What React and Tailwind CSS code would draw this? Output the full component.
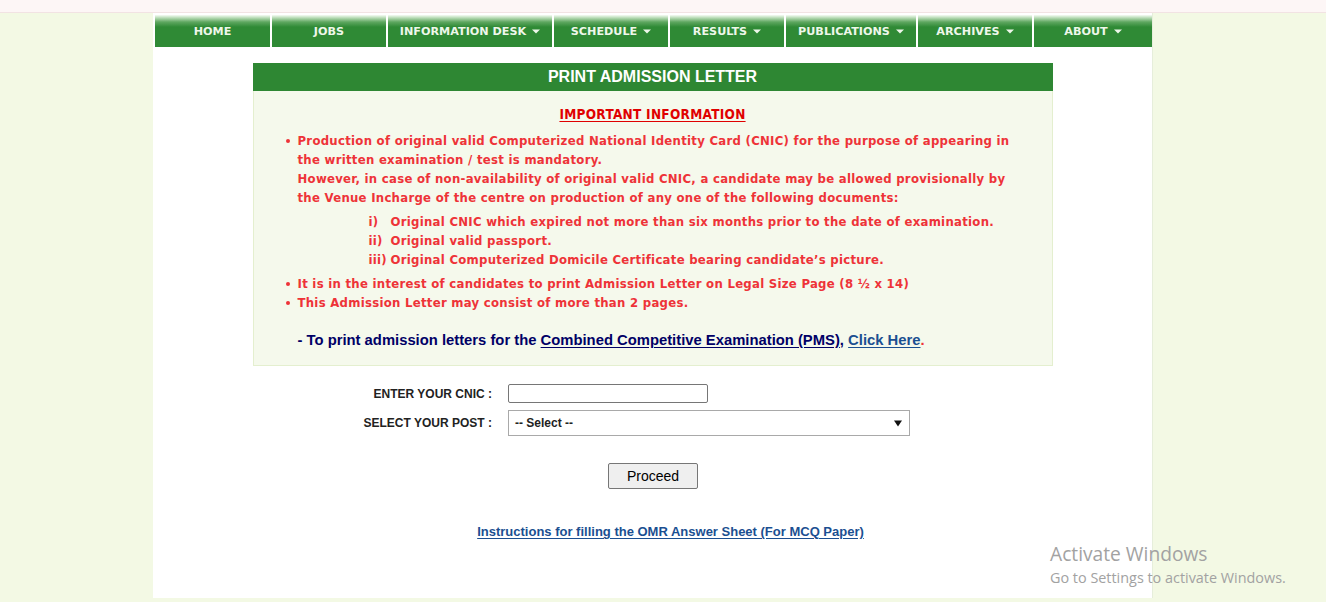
import React from "react";

const navItems = [
  { label: "HOME", w: "w-[115px]" },
  { label: "JOBS", w: "w-[114px]" },
  { label: "INFORMATION DESK", w: "w-[164px]", caret: true },
  { label: "SCHEDULE", w: "w-[114px]", caret: true },
  { label: "RESULTS", w: "w-[114px]", caret: true },
  { label: "PUBLICATIONS", w: "w-[130px]", caret: true },
  { label: "ARCHIVES", w: "w-[114px]", caret: true },
  { label: "ABOUT", w: "w-[118px]", caret: true },
];

function Caret() {
  return (
    <svg width="8" height="5" viewBox="0 0 8 5" className="ml-[6px] inline-block">
      <path d="M0 0.5 L8 0.5 L4 4.5 Z" fill="#eef7ea" />
    </svg>
  );
}

function Nav() {
  return (
    <div className="flex h-[32px] gap-[2px] pl-[2px]">
      {navItems.map((it) => (
        <div
          key={it.label}
          className={`${it.w} flex items-center justify-center bg-[linear-gradient(to_bottom,#f6fcf4_0px,#b4d9b2_3px,#5ea760_7px,#2f8a35_12px,#2f8a35_100%)] text-[11.2px] font-bold text-[#eef7ea] [font-family:'DejaVu_Sans',Verdana,sans-serif]`}
        >
          <span className="pt-[3px]">{it.label}</span>
          {it.caret && <Caret />}
        </div>
      ))}
    </div>
  );
}

function Bullet({ children }) {
  return (
    <div className="flex">
      <span className="w-[12px] shrink-0 h-[19px] flex items-center pt-[1px]">
        <span className="block w-[4px] h-[4px] rounded-full bg-[#ee3338]" />
      </span>
      <div>{children}</div>
    </div>
  );
}

function InfoBox() {
  return (
    <div className="w-[800px] mx-auto mt-[16px]">
      <div className="h-[28px] bg-[#2e8733] flex items-center justify-center text-white text-[16px] font-bold [font-family:'Liberation_Sans',Arial,sans-serif]">
        PRINT ADMISSION LETTER
      </div>
      <div className="bg-[#f5f9ec] border border-t-0 border-[#e4efcf] h-[275px] pt-[14px] pl-[32px] [font-family:'DejaVu_Sans_Condensed','DejaVu_Sans',Tahoma,sans-serif] text-[13px] font-bold text-[#ee3338] leading-[19px] tracking-[0.28px]">
        <div className="text-center pr-[32px] text-[13.5px] text-[#e00000] underline underline-offset-[2px]">
          IMPORTANT INFORMATION
        </div>
        <div className="mt-[7px] whitespace-nowrap">
          <Bullet>
            Production of original valid Computerized National Identity Card (CNIC) for the purpose of appearing in
            <br />
            the written examination / test is mandatory.
            <br />
            However, in case of non-availability of original valid CNIC, a candidate may be allowed provisionally by
            <br />
            the Venue Incharge of the centre on production of any one of the following documents:
            <div className="pl-[71px] mt-[5px] mb-[5px]">
              <div className="flex">
                <span className="w-[22px]">i)</span>
                <span>Original CNIC which expired not more than six months prior to the date of examination.</span>
              </div>
              <div className="flex">
                <span className="w-[22px]">ii)</span>
                <span>Original valid passport.</span>
              </div>
              <div className="flex">
                <span className="w-[22px]">iii)</span>
                <span>Original Computerized Domicile Certificate bearing candidate’s picture.</span>
              </div>
            </div>
          </Bullet>
          <Bullet>It is in the interest of candidates to print Admission Letter on Legal Size Page (8 ½ x 14)</Bullet>
          <Bullet>This Admission Letter may consist of more than 2 pages.</Bullet>
        </div>
        <div className="mt-[19px] pl-[12px] text-[14.8px] tracking-normal text-[#000066] [font-family:'Liberation_Sans',Arial,sans-serif]">
          - To print admission letters for the{" "}
          <a className="underline underline-offset-[2px] text-[#000066]">Combined Competitive Examination (PMS)</a>,{" "}
          <a className="underline underline-offset-[2px] text-[#1b4f91]">Click Here</a>
          <span className="text-[#ee3338]">.</span>
        </div>
      </div>
    </div>
  );
}

function Form() {
  return (
    <div className="[font-family:'Liberation_Sans',Arial,sans-serif] text-[12px] font-bold text-[#222]">
      <div className="flex items-center mt-[18px]">
        <div className="w-[355px] text-right pr-[16px]">ENTER YOUR CNIC :</div>
        <div className="w-[200px] h-[19px] border border-[#767676] rounded-[2px] bg-white" />
      </div>
      <div className="flex items-center mt-[7px]">
        <div className="w-[355px] text-right pr-[16px]">SELECT YOUR POST :</div>
        <div className="w-[402px] h-[26px] border border-[#a9a9a9] bg-white flex items-center justify-between pl-[6px] pr-[7px]">
          <span>-- Select --</span>
          <svg width="8" height="7" viewBox="0 0 8 7">
            <path d="M0 0.5 L8 0.5 L4 6.5 Z" fill="#111" />
          </svg>
        </div>
      </div>
      <div className="flex justify-center mt-[27px] pl-[1px]">
        <div className="w-[90px] h-[26px] border border-[#767676] rounded-[2px] bg-[#efefef] flex items-center justify-center font-normal text-[14px] text-black">
          Proceed
        </div>
      </div>
      <div className="text-center mt-[33px] pl-[36px] text-[13px]">
        <a className="underline underline-offset-[2px] text-[#1b4f91]">
          Instructions for filling the OMR Answer Sheet (For MCQ Paper)
        </a>
      </div>
    </div>
  );
}

export default function App() {
  return (
    <div className="relative w-[1326px] h-[602px] overflow-hidden bg-[#f3f9e4]">
      <div className="h-[13px] bg-[#fdf6f6] border-b border-[#f2e3e3]" />
      <div className="w-[1000px] ml-[153px] h-[585px] bg-white border-r border-[#e6eedb] pt-[2px]">
        <Nav />
        <InfoBox />
        <Form />
      </div>
      {/* system watermark in the corner */}
      <div className="absolute left-[1050px] top-[542px] text-[#a2a2a2] [font-family:'Open_Sans',sans-serif]">
        <div className="text-[19.2px] leading-[24px]">Activate Windows</div>
        <div className="text-[14.4px] leading-[20px] mt-[2px]">Go to Settings to activate Windows.</div>
      </div>
    </div>
  );
}
